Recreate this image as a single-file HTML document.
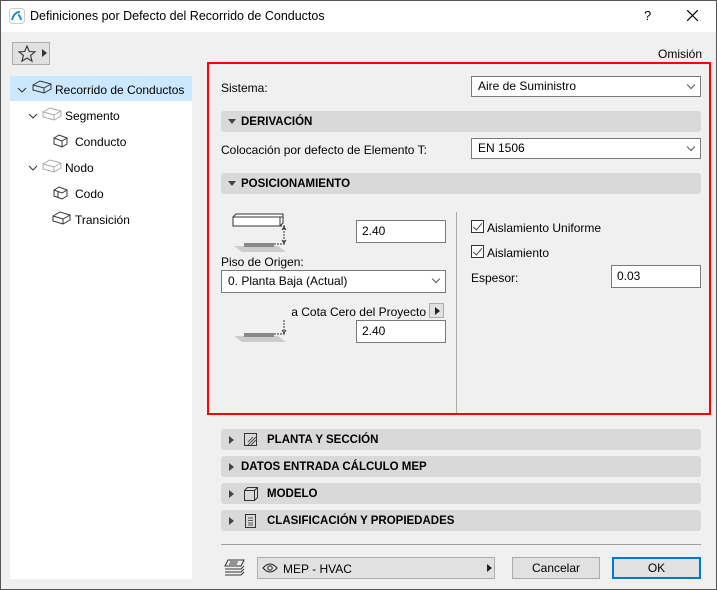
<!DOCTYPE html>
<html><head><meta charset="utf-8"><style>
*{box-sizing:border-box;margin:0;padding:0}
body{width:717px;height:590px;overflow:hidden;background:#f0f0f0;font-family:"Liberation Sans",sans-serif;font-size:12px;color:#000;position:relative}
.a{position:absolute}
.win{position:absolute;left:0;top:0;width:717px;height:590px;border:1px solid #555}
.sel{position:absolute;background:#fff;border:1px solid #7a7a7a;padding-left:6px;line-height:19px;font-size:12px}
.sel::after{content:"";position:absolute;right:6px;top:5px;width:5px;height:5px;border-right:1px solid #555;border-bottom:1px solid #555;transform:rotate(45deg)}
.inp{position:absolute;background:#fff;border:1px solid #7a7a7a;padding-left:5px;line-height:21px}
.hdr{position:absolute;left:221px;width:480px;height:21px;background:#d9d9d9;border-radius:3px;font-weight:bold;font-size:11.5px;line-height:23px}
.tri{position:absolute;width:0;height:0}
.td{border-left:4px solid transparent;border-right:4px solid transparent;border-top:5px solid #444}
.tr{border-top:4px solid transparent;border-bottom:4px solid transparent;border-left:5px solid #444}
.cb{position:absolute;width:13px;height:13px;border:1px solid #333;background:#fff}
.cb::after{content:"";position:absolute;left:3px;top:0px;width:4px;height:8px;border-right:1.5px solid #444;border-bottom:1.5px solid #444;transform:rotate(40deg)}
.btn{position:absolute;background:#e1e1e1;border:1px solid #adadad;text-align:center;line-height:21px}
</style></head><body>
<div class="win"></div>
<div class="a" style="left:1px;top:1px;width:715px;height:31px;background:#fff"></div>
<svg class="a" style="left:9px;top:8px" width="16" height="16"><rect x=".5" y=".5" width="15" height="15" rx="3" fill="#fff" stroke="#ccc"/><path d="M3 12 Q5 4 11 4 M9 7 Q11 7 12 12" stroke="#1a8ccf" stroke-width="2" fill="none"/></svg>
<div class="a" style="left:30px;top:9px;font-size:12.5px">Definiciones por Defecto del Recorrido de Conductos</div>
<div class="a" style="left:644px;top:8px;font-size:13px">?</div>
<svg class="a" style="left:687px;top:10px" width="11" height="11"><path d="M0 0L11 11M11 0L0 11" stroke="#000" stroke-width="1.2"/></svg>

<div class="a" style="left:12px;top:42px;width:38px;height:23px;border:1px solid #adadad;background:#e1e1e1"></div>
<svg class="a" style="left:17px;top:44px" width="20" height="20"><path d="M10 2L12.3 7.5 18 7.8 13.6 11.5 15 17.2 10 14 5 17.2 6.4 11.5 2 7.8 7.7 7.5Z" fill="none" stroke="#333" stroke-width="1.1"/></svg>
<div class="tri tr" style="left:42px;top:49px;border-left-color:#333"></div>
<div class="a" style="left:658px;top:47px">Omisión</div>

<div class="a" style="left:10px;top:76px;width:182px;height:503px;background:#fff"></div>
<div class="a" style="left:10px;top:76px;width:182px;height:25px;background:#cce8ff"></div>
<svg class="a" style="left:0;top:76px" width="200" height="160" fill="none" stroke="#333">
<path d="M18 12l4 4 4-4"/><path d="M33 9l7-4 11 3v5l-7 4-11-3z M33 9l11 3 7-4 M44 12v5"/>
<path d="M29 38l4 4 4-4"/><path d="M43 36l7-4 11 3v5l-7 4-11-3z M43 36l11 3 7-4 M54 39v5" stroke="#aaa"/>
<path d="M54 62l5-3 8 3v6l-5 3-8-3z M54 62l8 3 5-3 M62 65v6"/>
<path d="M29 90l4 4 4-4"/><path d="M43 88l7-4 11 3v5l-7 4-11-3z M43 88l11 3 7-4 M54 91v5" stroke="#aaa"/>
<path d="M54 114l5-3 8 3v6l-5 3-8-3z M54 114l8 3 5-3 M58 116v6"/>
<path d="M53 140l7-4 10 3v5l-7 4-10-3z M53 140l10 3 7-4 M63 143v5"/>
</svg>
<div class="a" style="left:55px;top:83px">Recorrido de Conductos</div>
<div class="a" style="left:65px;top:109px">Segmento</div>
<div class="a" style="left:75px;top:135px">Conducto</div>
<div class="a" style="left:65px;top:161px">Nodo</div>
<div class="a" style="left:75px;top:187px">Codo</div>
<div class="a" style="left:75px;top:213px">Transición</div>

<div class="a" style="left:207px;top:62px;width:504px;height:353px;border:2px solid #f00"></div>
<div class="a" style="left:221px;top:81px">Sistema:</div>
<div class="sel" style="left:471px;top:76px;width:230px;height:21px">Aire de Suministro</div>
<div class="hdr" style="top:111px"><div class="tri td" style="left:7px;top:8px"></div><span style="margin-left:20px">DERIVACIÓN</span></div>
<div class="a" style="left:221px;top:143px">Colocación por defecto de Elemento T:</div>
<div class="sel" style="left:471px;top:138px;width:230px;height:21px">EN 1506</div>
<div class="hdr" style="top:173px"><div class="tri td" style="left:7px;top:8px"></div><span style="margin-left:20px">POSICIONAMIENTO</span></div>

<svg class="a" style="left:220px;top:212px" width="70" height="135" fill="none">
<path d="M14 34h44l8 6H22z" fill="#ccc"/><rect x="24" y="31" width="30" height="4" fill="#888"/>
<path d="M13 5l3-3h47v9l-3 3H13z" fill="#fff" stroke="#333"/><path d="M13 5h50M60 5v9" stroke="#333"/>
<path d="M60 14h5M54 32h11M64 16v14" stroke="#333" stroke-dasharray="2 1"/><path d="M62 18l2-3 2 3M62 28l2 3 2-3" stroke="#333"/>
<path d="M14 124h44l8 6H22z" fill="#ccc"/><rect x="24" y="121" width="30" height="4" fill="#888"/>
<path d="M54 122h11M64 108v12" stroke="#333" stroke-dasharray="2 1"/><path d="M62 118l2 3 2-3" stroke="#333"/>
</svg>
<div class="inp" style="left:356px;top:220px;width:90px;height:23px">2.40</div>
<div class="a" style="left:221px;top:255px">Piso de Origen:</div>
<div class="sel" style="left:221px;top:270px;width:225px;height:23px;line-height:21px">0. Planta Baja (Actual)</div>
<div class="a" style="left:200px;top:305px;width:226px;text-align:right;white-space:nowrap">a Cota Cero del Proyecto</div>
<div class="btn" style="left:429px;top:303px;width:15px;height:15px"></div><div class="tri tr" style="left:435px;top:307px;border-left-color:#222"></div>
<div class="inp" style="left:356px;top:320px;width:90px;height:23px">2.40</div>
<div class="a" style="left:456px;top:212px;width:1px;height:201px;background:#aaa"></div>
<div class="cb" style="left:471px;top:220px"></div><div class="a" style="left:487px;top:221px">Aislamiento Uniforme</div>
<div class="cb" style="left:471px;top:245px"></div><div class="a" style="left:487px;top:246px">Aislamiento</div>
<div class="a" style="left:471px;top:271px">Espesor:</div>
<div class="inp" style="left:611px;top:265px;width:90px;height:23px">0.03</div>

<div class="hdr" style="top:429px"><div class="tri tr" style="left:8px;top:7px"></div><span style="margin-left:46px">PLANTA Y SECCIÓN</span></div>
<svg class="a" style="left:242px;top:431px" width="18" height="18" fill="none" stroke="#333"><rect x="2.5" y="2.5" width="12" height="12"/><path d="M6 14l8-8M9 14l5-5M6 11l5-5" stroke-width=".8"/></svg>
<div class="hdr" style="top:456px"><div class="tri tr" style="left:8px;top:7px"></div><span style="margin-left:20px">DATOS ENTRADA CÁLCULO MEP</span></div>
<div class="hdr" style="top:483px"><div class="tri tr" style="left:8px;top:7px"></div><span style="margin-left:46px">MODELO</span></div>
<svg class="a" style="left:242px;top:485px" width="18" height="18" fill="none" stroke="#333"><path d="M2.5 5.5h10v10h-10zM2.5 5.5l3-3h10v10l-3 3M12.5 5.5l3-3"/></svg>
<div class="hdr" style="top:510px"><div class="tri tr" style="left:8px;top:7px"></div><span style="margin-left:46px">CLASIFICACIÓN Y PROPIEDADES</span></div>
<svg class="a" style="left:242px;top:512px" width="18" height="18" fill="none" stroke="#333"><rect x="3.5" y="2.5" width="10" height="13"/><path d="M6 6h5M6 8.5h5M6 11h5M6 13h5" stroke-width=".8"/></svg>

<div class="a" style="left:221px;top:544px;width:480px;height:1px;background:#a0a0a0"></div>
<svg class="a" style="left:222px;top:557px" width="26" height="22" fill="none" stroke="#333"><path d="M6 3h16l-3 6H3zM3 12h16l3-3M3 15h16l3-3M3 18h16l3-3M8 5h8M7 7h8"/></svg>
<div class="a" style="left:257px;top:557px;width:238px;height:22px;border:1px solid #adadad;background:#e1e1e1"></div>
<svg class="a" style="left:262px;top:562px" width="16" height="12" fill="none" stroke="#222"><path d="M1 6Q8-2 15 6Q8 14 1 6z"/><circle cx="8" cy="6" r="2.2"/></svg>
<div class="a" style="left:283px;top:562px">MEP - HVAC</div>
<div class="tri tr" style="left:487px;top:564px;border-left-color:#222"></div>
<div class="btn" style="left:512px;top:557px;width:88px;height:22px">Cancelar</div>
<div class="btn" style="left:612px;top:557px;width:89px;height:22px;border:2px solid #0078d7;line-height:19px">OK</div>
</body></html>
